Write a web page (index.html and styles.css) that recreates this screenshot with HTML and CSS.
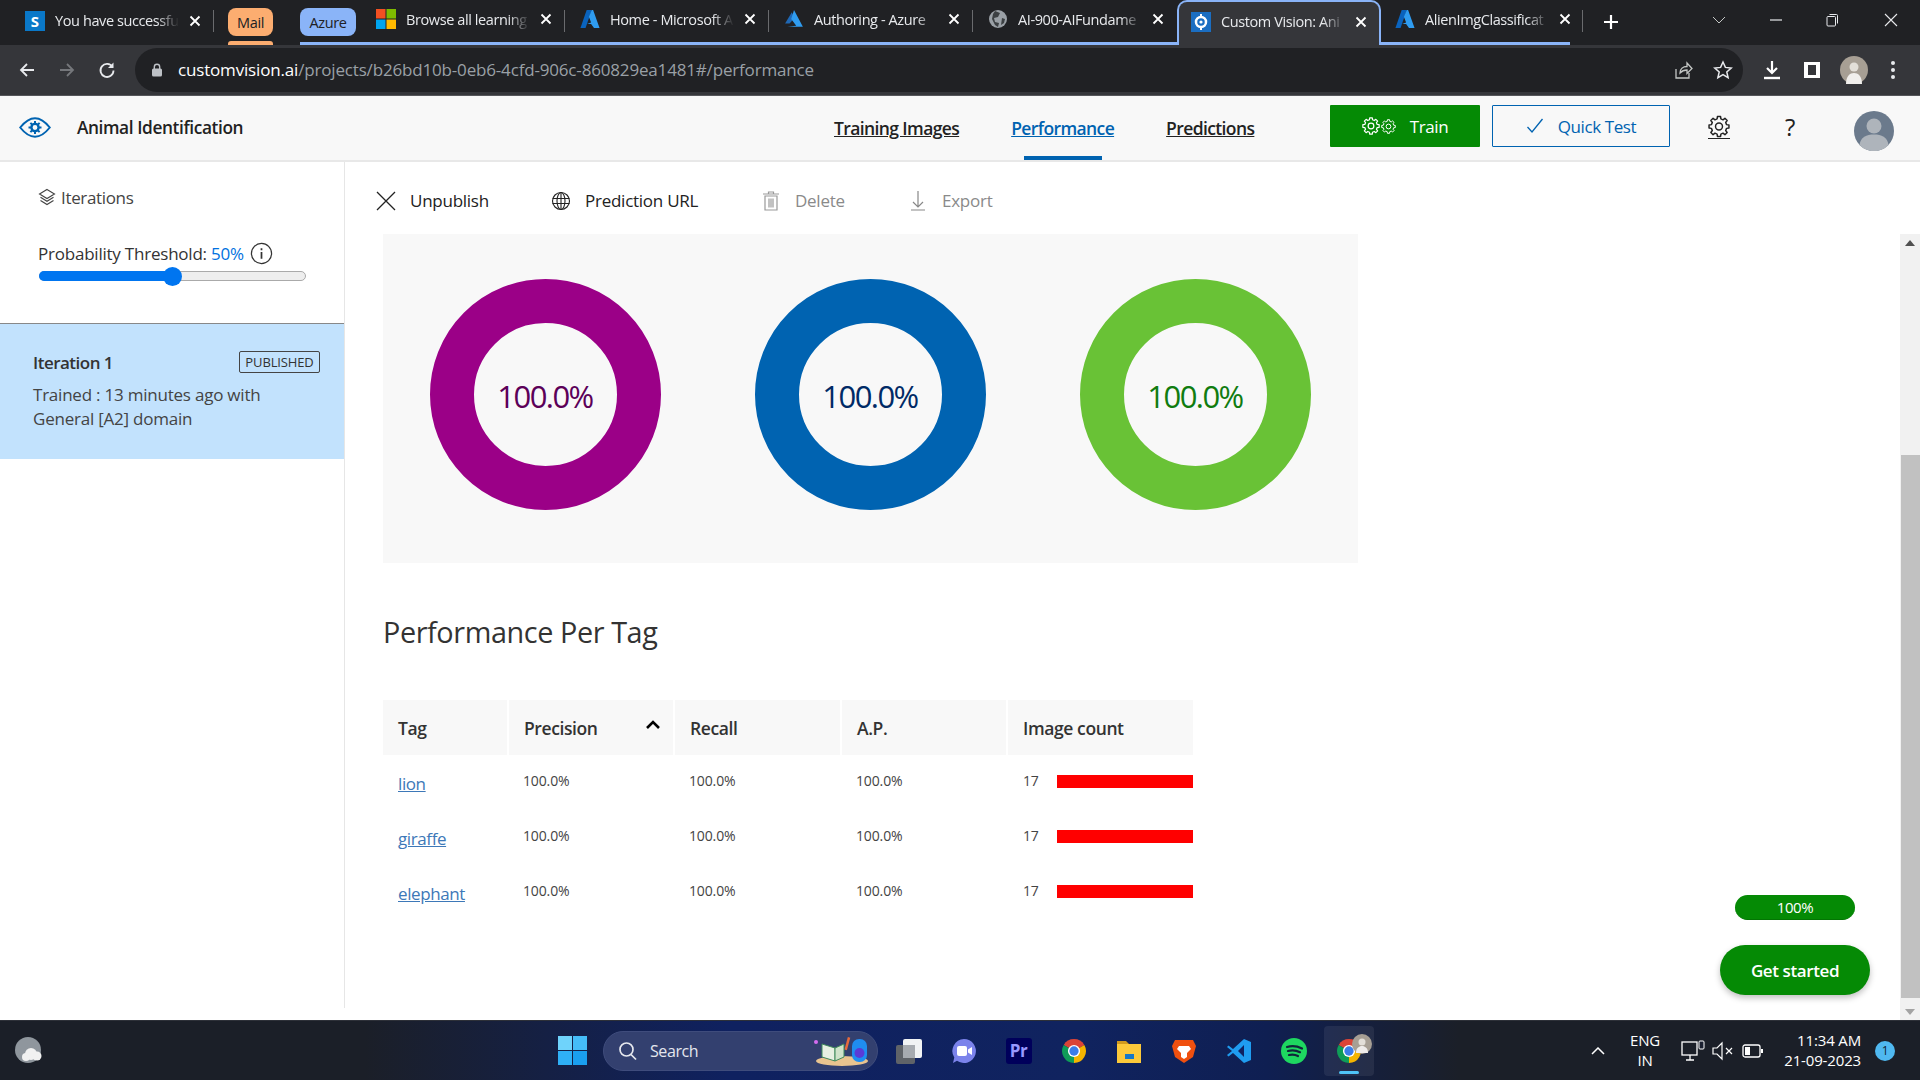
FILE: index.html
```html
<!DOCTYPE html>
<html lang="en">
<head>
<meta charset="utf-8">
<title>Custom Vision: Animal Identification</title>
<link rel="stylesheet" href="styles.css">
</head>
<body>
<svg class="defs" width="0" height="0">
  <defs>
    <symbol id="azure" viewBox="0 0 18 18"><path fill="#0a63bd" d="M6 1h4.600L5 17H.4z"/><path fill="#2f9cf0" d="M10.600 1h1.200L17.600 17h-5L10 13.600H6.400l3.600-1.400L8 7z"/></symbol>
    <symbol id="azure2" viewBox="0 0 18 18"><path fill="#1f68b5" d="M7 3 1 13l4 0L9.500 8z"/><path fill="#2f9cf0" d="M9 1 17 16H3l8-1-4.500-6z"/></symbol>
    <symbol id="chrome" viewBox="-12 -12 24 24"><path fill="#db4437" d="M0 0-9.530-5.500A11 11 0 0 1 9.530-5.500z"/><path fill="#f4b400" d="M0 0 9.530-5.500A11 11 0 0 1 0 11z"/><path fill="#0f9d58" d="M0 0V11A11 11 0 0 1-9.530-5.500z"/><circle r="5.600" fill="#fff"/><circle r="4.300" fill="#3b7de8"/></symbol>
    <symbol id="gear" viewBox="-12 -12 24 24"><path fill="none" stroke="currentColor" stroke-width="1.600" stroke-linejoin="round" d="M8.250-2.060 10.860-1.720V1.720L8.250 2.060 7.290 4.380 8.900 6.470 6.470 8.900 4.380 7.290 2.060 8.250 1.720 10.860H-1.720L-2.060 8.250-4.380 7.290-6.470 8.900-8.900 6.470-7.290 4.380-8.250 2.060-10.860 1.720V-1.720L-8.250-2.060-7.290-4.380-8.900-6.470-6.470-8.900-4.380-7.290-2.060-8.250-1.720-10.860H1.720L2.060-8.250 4.380-7.290 6.470-8.900 8.900-6.470 7.290-4.380z"/><circle r="3.800" fill="none" stroke="currentColor" stroke-width="1.600"/></symbol>
    <symbol id="close" viewBox="0 0 12 12"><path d="M1.500 1.500l9 9m0-9l-9 9" stroke="currentColor" stroke-width="1.800" fill="none"/></symbol>
  </defs>
</svg>

<header class="tabstrip">
  <div class="tab">
    <span class="favicon fav-s">S</span>
    <span class="tab-title">You have successfu</span>
    <svg class="tab-x"><use href="#close"/></svg>
  </div>
  <div class="group-chip chip-mail">Mail</div>
  <div class="chip-slot grouped"><div class="group-chip chip-azure">Azure</div></div>
  <div class="tab grouped">
    <svg class="favicon" viewBox="0 0 20 20"><rect width="9.500" height="9.500" fill="#f25022"/><rect x="10.500" width="9.500" height="9.500" fill="#7fba00"/><rect y="10.500" width="9.500" height="9.500" fill="#00a4ef"/><rect x="10.500" y="10.500" width="9.500" height="9.500" fill="#ffb900"/></svg>
    <span class="tab-title">Browse all learning</span>
    <svg class="tab-x"><use href="#close"/></svg>
  </div>
  <div class="tab grouped">
    <svg class="favicon"><use href="#azure"/></svg>
    <span class="tab-title">Home - Microsoft A</span>
    <svg class="tab-x"><use href="#close"/></svg>
  </div>
  <div class="tab grouped">
    <svg class="favicon"><use href="#azure2"/></svg>
    <span class="tab-title">Authoring - Azure</span>
    <svg class="tab-x"><use href="#close"/></svg>
  </div>
  <div class="tab grouped tab-nosep">
    <svg class="favicon" viewBox="0 0 20 20"><circle cx="10" cy="10" r="9" fill="#9aa0a6"/><path fill="#3c4043" d="M7 2l5 2-2 4-4 1 1 4 4 1-1 4-3-2-3-6 1-5zM14 9l3 1-1 4-3 2z"/></svg>
    <span class="tab-title">AI-900-AIFundame</span>
    <svg class="tab-x"><use href="#close"/></svg>
  </div>
  <div class="tab tab-active">
    <svg class="favicon" viewBox="0 0 20 20"><rect width="20" height="20" fill="#1b6ec2"/><circle cx="10" cy="10" r="5" fill="none" stroke="#fff" stroke-width="2.500"/><circle cx="10" cy="10" r="1.600" fill="#fff"/><path d="M10 2v3M10 15v3" stroke="#fff" stroke-width="2"/></svg>
    <span class="tab-title">Custom Vision: Ani</span>
    <svg class="tab-x"><use href="#close"/></svg>
  </div>
  <div class="tab grouped tab-last">
    <svg class="favicon"><use href="#azure"/></svg>
    <span class="tab-title">AlienImgClassificat</span>
    <svg class="tab-x"><use href="#close"/></svg>
  </div>
  <svg class="newtab" viewBox="0 0 16 16"><path d="M8 1v14M1 8h14" stroke="#fff" stroke-width="2.200"/></svg>
  <div class="window-controls">
    <svg class="wc wc-chev" viewBox="0 0 14 8"><path d="M1 1l6 6 6-6" stroke="#c4c7c5" fill="none"/></svg>
    <svg class="wc wc-min" viewBox="0 0 14 14"><path d="M1 7h12" stroke="#e8eaed" stroke-width="1.200"/></svg>
    <svg class="wc wc-max" viewBox="0 0 14 14"><rect x="2" y="3.500" width="8.500" height="9.500" rx="1" fill="none" stroke="#e8eaed"/><path d="M4.500 1.500h7a1 1 0 0 1 1 1v8" fill="none" stroke="#e8eaed"/></svg>
    <svg class="wc wc-close" viewBox="0 0 14 14"><path d="M1 1l12 12m0-12L1 13" stroke="#e8eaed" stroke-width="1.100"/></svg>
  </div>
</header>

<div class="toolbar">
  <div class="nav-buttons">
    <svg class="nav-btn" viewBox="0 0 18 18"><path d="M16 9H3M9 3 3 9l6 6" fill="none" stroke="#e8eaed" stroke-width="1.800"/></svg>
    <svg class="nav-btn" viewBox="0 0 18 18"><path d="M2 9h13M9 3l6 6-6 6" fill="none" stroke="#75777b" stroke-width="1.800"/></svg>
    <svg class="nav-btn" viewBox="0 0 18 18"><path d="M14.500 6A6.500 6.500 0 1 0 15.500 9.500" fill="none" stroke="#e8eaed" stroke-width="1.800"/><path d="M15.500 1.500V7H10z" fill="#e8eaed"/></svg>
  </div>
  <div class="omnibox">
    <svg class="lock" viewBox="0 0 12 14"><rect x="1" y="5.500" width="10" height="8" rx="1.500" fill="#bdc1c6"/><path d="M3.300 6V4a2.700 2.700 0 0 1 5.400 0v2" fill="none" stroke="#bdc1c6" stroke-width="1.400"/></svg>
    <span class="url"><span class="url-host">customvision.ai</span><span class="url-path">/projects/b26bd10b-0eb6-4cfd-906c-860829ea1481#/performance</span></span>
    <svg class="omni-icon share" viewBox="0 0 20 20"><path d="M3 9v9h13v-5" fill="none" stroke="#c4c7c5" stroke-width="1.300"/><path d="M7 13c0-4 3-6.500 7-6.500V3l5 5.500-5 5V10c-3 0-5 .8-7 3z" fill="none" stroke="#c4c7c5" stroke-width="1.300"/></svg>
    <svg class="omni-icon" viewBox="0 0 20 20"><path d="M10 2l2.400 5.400 5.800.6-4.400 3.900 1.300 5.800L10 14.700 4.900 17.700l1.300-5.800L1.800 8l5.800-.6z" fill="none" stroke="#e8eaed" stroke-width="1.500"/></svg>
  </div>
  <div class="toolbar-right">
    <svg class="tool-icon" viewBox="0 0 20 20"><path d="M10 1v11M5 8l5 5 5-5" fill="none" stroke="#fff" stroke-width="2.200"/><path d="M2 18h16" stroke="#fff" stroke-width="2.400"/></svg>
    <svg class="tool-icon" viewBox="0 0 20 20"><rect x="2" y="2" width="16" height="16" fill="#fff"/><rect x="6" y="5" width="8" height="10" fill="#35363a"/></svg>
    <svg class="tool-avatar" viewBox="0 0 28 28"><circle cx="14" cy="14" r="14" fill="#a79f94"/><circle cx="14" cy="11" r="4.500" fill="#e3dfd8"/><path d="M6 28c0-8 4-11 8-11s8 3 8 11z" fill="#f1efec"/></svg>
    <svg class="tool-menu" viewBox="0 0 4 20"><circle cx="2" cy="3" r="2" fill="#e8eaed"/><circle cx="2" cy="10" r="2" fill="#e8eaed"/><circle cx="2" cy="17" r="2" fill="#e8eaed"/></svg>
  </div>
</div>

<div class="app">
  <div class="app-header">
    <div class="brand">
      <svg class="logo" viewBox="0 0 32 21"><path d="M1.200 10.500C6 4.500 10.500 1.200 16 1.200S26 4.500 30.800 10.500C26 16.500 21.500 19.800 16 19.800S6 16.500 1.200 10.500z" fill="none" stroke="#0063b1" stroke-width="2"/><circle cx="16" cy="10.500" r="3.600" fill="none" stroke="#0063b1" stroke-width="2.400"/><path d="M16 4v3M16 14v3M9.500 10.500h3M19.500 10.500h3M11.400 5.900l2.100 2.100M18.500 13l2.100 2.100M20.600 5.900 18.500 8M13.500 13l-2.100 2.100" stroke="#0063b1" stroke-width="2"/></svg>
      <span class="brand-name">Animal Identification</span>
    </div>
    <nav class="main-nav">
      <a class="nav-link">Training Images</a>
      <a class="nav-link nav-active">Performance</a>
      <a class="nav-link">Predictions</a>
    </nav>
    <div class="actions">
      <button class="btn-train">
        <svg class="gear-lg"><use href="#gear"/></svg><svg class="gear-sm"><use href="#gear"/></svg>
        <span>Train</span>
      </button>
      <button class="btn-quick">
        <svg class="check" viewBox="0 0 18 18"><path d="M1.500 10l4.500 5L16.500 2" fill="none" stroke="#0063b1" stroke-width="1.300"/></svg>
        <span>Quick Test</span>
      </button>
      <svg class="gear-head"><use href="#gear"/></svg>
      <span class="help">?</span>
      <svg class="avatar" viewBox="0 0 40 40"><circle cx="20" cy="20" r="20" fill="#6b7a8c"/><circle cx="20" cy="15" r="7.500" fill="#aeb4bb"/><path d="M5.500 34c1-8 7-10.500 14.500-10.500S33.500 26 34.500 34A20 20 0 0 1 5.500 34z" fill="#aeb4bb"/></svg>
    </div>
  </div>

  <div class="workspace">
    <aside class="sidebar">
      <div class="iter-head">
        <svg class="layers" viewBox="0 0 18 18"><path d="M9 1.500 16.500 6 9 10.500 1.500 6z" fill="none" stroke="#444" stroke-width="1.100"/><path d="M2.500 9.300 9 13.300l6.500-4M2.500 12.500 9 16.500l6.500-4" fill="none" stroke="#444" stroke-width="1.100"/></svg>
        <span>Iterations</span>
      </div>
      <div class="threshold">
        <span>Probability Threshold: <span class="thr-val">50%</span></span>
        <svg class="info" viewBox="0 0 24 24"><circle cx="12" cy="12" r="10.500" fill="none" stroke="#333" stroke-width="1.300"/><path d="M12 10.500v7M12 6.500v2" stroke="#333" stroke-width="1.800"/></svg>
      </div>
      <div class="slider"><div class="slider-fill"></div><div class="slider-knob"></div></div>
      <div class="iter-item">
        <div class="iter-top"><strong>Iteration 1</strong><span class="badge">PUBLISHED</span></div>
        <p class="iter-desc">Trained : 13 minutes ago with General [A2] domain</p>
      </div>
    </aside>

    <main class="content">
      <div class="actionbar">
        <div class="action act-unpub"><svg class="act-icon" viewBox="0 0 20 20"><path d="M1 1l18 18m0-18L1 19" stroke="#222" stroke-width="1.300"/></svg><span>Unpublish</span></div>
        <div class="action act-url"><svg class="act-icon" viewBox="0 0 20 20"><circle cx="10" cy="10" r="8.500" fill="none" stroke="#222" stroke-width="1.100"/><ellipse cx="10" cy="10" rx="4" ry="8.500" fill="none" stroke="#222" stroke-width="1.100"/><path d="M1.500 7.500h17M1.500 12.500h17M10 1.500v17" stroke="#222" stroke-width="1.100"/></svg><span>Prediction URL</span></div>
        <div class="action act-off act-del"><svg class="act-icon" viewBox="0 0 20 20"><path d="M4 5h12v14H4zM2 3h16M7.500 3V1h5v2M8 7.500v9M12 7.500v9M10 7.500v9" fill="none" stroke="#999" stroke-width="1.200"/></svg><span>Delete</span></div>
        <div class="action act-off"><svg class="act-icon" viewBox="0 0 20 20"><path d="M10 0v16M5 11l5 5 5-5M3 19h14" fill="none" stroke="#888" stroke-width="1.200"/></svg><span>Export</span></div>
      </div>
      <div class="scroller">
        <div class="scroll-body">
          <section class="rings">
            <div class="ring ring-purple"><span>100.0%</span></div>
            <div class="ring ring-blue"><span>100.0%</span></div>
            <div class="ring ring-green"><span>100.0%</span></div>
          </section>
          <h2 class="per-tag">Performance Per Tag</h2>
          <div class="tag-table">
            <div class="t-row t-head">
              <div class="t-cell">Tag</div>
              <div class="t-cell t-sort">Precision<svg class="caret" viewBox="0 0 16 10"><path d="M2 8l6-6 6 6" fill="none" stroke="#000" stroke-width="2.600"/></svg></div>
              <div class="t-cell">Recall</div>
              <div class="t-cell">A.P.</div>
              <div class="t-cell t-count">Image count</div>
            </div>
            <div class="t-row">
              <div class="t-cell"><a class="tag-link">lion</a></div>
              <div class="t-cell t-num">100.0%</div><div class="t-cell t-num">100.0%</div><div class="t-cell t-num">100.0%</div>
              <div class="t-cell t-num t-count"><span class="count-num">17</span><span class="count-bar"></span></div>
            </div>
            <div class="t-row">
              <div class="t-cell"><a class="tag-link">giraffe</a></div>
              <div class="t-cell t-num">100.0%</div><div class="t-cell t-num">100.0%</div><div class="t-cell t-num">100.0%</div>
              <div class="t-cell t-num t-count"><span class="count-num">17</span><span class="count-bar"></span></div>
            </div>
            <div class="t-row">
              <div class="t-cell"><a class="tag-link">elephant</a></div>
              <div class="t-cell t-num">100.0%</div><div class="t-cell t-num">100.0%</div><div class="t-cell t-num">100.0%</div>
              <div class="t-cell t-num t-count"><span class="count-num">17</span><span class="count-bar"></span></div>
            </div>
          </div>
        </div>
        <div class="scrollbar">
          <div class="sb-arrow"><svg viewBox="0 0 10 6"><path d="M5 0l5 6H0z" fill="#505050"/></svg></div>
          <div class="sb-track"><div class="sb-thumb"></div></div>
          <div class="sb-arrow"><svg viewBox="0 0 10 6"><path d="M0 0h10L5 6z" fill="#a3a3a3"/></svg></div>
        </div>
      </div>
    </main>
  </div>
  <div class="floating">
    <div class="progress-pill">100%</div>
    <button class="get-started">Get started</button>
  </div>
</div>

<footer class="taskbar">
  <div class="tb-left"><svg class="weather" viewBox="0 0 28 28"><circle cx="13" cy="13" r="13" fill="#8f969d"/><circle cx="16" cy="17" r="6" fill="#f1f1f1"/><circle cx="22" cy="19" r="4.500" fill="#f1f1f1"/><circle cx="11" cy="20" r="4" fill="#f1f1f1"/></svg></div>
  <div class="tb-center">
    <svg class="start" viewBox="0 0 29 29"><rect width="14" height="14" fill="#6fd3fb"/><rect x="15" width="14" height="14" fill="#45bdf8"/><rect y="15" width="14" height="14" fill="#2fb0f6"/><rect x="15" y="15" width="14" height="14" fill="#1a9ff0"/></svg>
    <div class="searchbox">
      <svg class="search-ic" viewBox="0 0 20 20"><circle cx="8.500" cy="8.500" r="6.500" fill="none" stroke="#e6e8ee" stroke-width="1.700"/><path d="M13 13.500l5 5" stroke="#e6e8ee" stroke-width="1.700"/></svg>
      <span>Search</span>
      <svg class="search-art" viewBox="0 0 58 30"><ellipse cx="30" cy="25" rx="26" ry="5" fill="#e9c48f"/><path d="M10 8l13 4v13l-13-4z" fill="#e7f0e2" stroke="#3f8a5a"/><path d="M23 12l9-4v13l-9 4z" fill="#cfe3c9" stroke="#3f8a5a"/><rect x="34" y="1" width="2.500" height="13" fill="#e86a3c" transform="rotate(15 35 8)"/><rect x="40" y="3" width="15" height="23" rx="7" fill="#1f8df0"/><circle cx="47.500" cy="17" r="5" fill="#5a3bd6"/><circle cx="4" cy="6" r="2" fill="#d56cf0"/></svg>
    </div>
    <div class="tb-apps">
      <div class="tb-app"><svg class="tb-ic" viewBox="0 0 26 26"><rect y="7" width="19" height="19" rx="2" fill="#5f6368"/><rect x="7" y="1" width="19" height="19" rx="2" fill="#f1f3f4"/><rect x="7" y="7" width="12" height="13" fill="#a7abb0"/></svg></div>
      <div class="tb-app"><svg class="tb-ic" viewBox="0 0 26 26"><path d="M13 1a12 12 0 1 1-7 21.800L2 25l1.300-5.500A12 12 0 0 1 13 1z" fill="#7b83eb"/><rect x="6" y="8" width="10" height="10" rx="2" fill="#fff"/><path d="M17 11.500l4-2.500v8l-4-2.500z" fill="#fff"/></svg></div>
      <div class="tb-app"><span class="pr">Pr</span></div>
      <div class="tb-app"><svg class="tb-ic"><use href="#chrome"/></svg></div>
      <div class="tb-app"><svg class="tb-ic" viewBox="0 0 26 26"><path d="M1 3h9l3 3h-12z" fill="#d19a1e"/><rect x="1" y="6" width="24" height="19" fill="#fcc93a"/><rect x="9" y="16" width="9" height="5" fill="#1678c8"/></svg></div>
      <div class="tb-app"><svg class="tb-ic" viewBox="0 0 26 26"><path d="M4 2h18l3 6-3 11-9 6-9-6L1 8z" fill="#f0500f"/><path d="M8 8h10l2 3-4 4v4l-3 2-3-2v-4l-4-4z" fill="#fff"/></svg></div>
      <div class="tb-app"><svg class="tb-ic" viewBox="0 0 26 26"><path d="M18 1l7 3v18l-7 3L7 15l-4.500 3.500L1 17l5-4-5-4 1.500-1.500L7 11z" fill="#1f9cf0"/><path d="M18 7l-6 6 6 6z" fill="#0f2160"/></svg></div>
      <div class="tb-app"><svg class="tb-ic" viewBox="0 0 26 26"><circle cx="13" cy="13" r="13" fill="#1ed760"/><path d="M6 9c5-1.500 10-1 15 1.500M7 13c4-1 8-.8 12 1.200M8 17c3-.7 6-.6 9 1" fill="none" stroke="#10263a" stroke-width="2.200" stroke-linecap="round"/></svg></div>
      <div class="tb-app tb-active">
        <svg class="tb-ic"><use href="#chrome"/></svg>
        <svg class="tb-badge" viewBox="0 0 20 20"><circle cx="10" cy="10" r="10" fill="#a79f94"/><circle cx="10" cy="8" r="3.500" fill="#e3dfd8"/><path d="M4 19c0-5 3-7 6-7s6 2 6 7z" fill="#efecea"/></svg>
      </div>
    </div>
  </div>
  <div class="tray">
    <svg class="tray-chev" viewBox="0 0 14 8"><path d="M1 7l6-6 6 6" fill="none" stroke="#fff" stroke-width="1.500"/></svg>
    <div class="lang"><span>ENG</span><span>IN</span></div>
    <svg class="tray-ic" viewBox="0 0 24 22"><rect x="1" y="2" width="15" height="13" fill="none" stroke="#fff" stroke-width="1.300"/><path d="M5 20h8M9 15v5" stroke="#fff" stroke-width="1.300"/><rect x="18" y="1" width="5" height="8" rx="1" fill="#1b2030" stroke="#fff"/></svg>
    <svg class="tray-ic tray-vol" viewBox="0 0 22 20"><path d="M1 7h4l5-5v16l-5-5H1z" fill="none" stroke="#fff" stroke-width="1.200"/><path d="M14 7l6 6m0-6l-6 6" stroke="#fff" stroke-width="1.200"/></svg>
    <svg class="tray-ic tray-bat" viewBox="0 0 22 14"><rect x="1" y="1" width="17" height="12" rx="2" fill="none" stroke="#fff" stroke-width="1.300"/><rect x="3" y="3" width="5" height="8" fill="#fff"/><rect x="19" y="5" width="2" height="4" fill="#fff"/></svg>
    <div class="clock"><span>11:34 AM</span><span>21-09-2023</span></div>
    <span class="notif">1</span>
  </div>
</footer>
</body>
</html>
```
FILE: styles.css
```css
* { box-sizing: border-box; }
html, body { margin: 0; height: 100%; }
body {
  width: 1920px; height: 1080px; overflow: hidden;
  display: flex; flex-direction: column;
  font-family: "Open Sans", "Noto Sans", sans-serif;
  letter-spacing: -0.025em;
  color: #333; background: #fff;
}
.defs { position: absolute; }
svg { display: block; flex: none; }

/* tab strip */
.tabstrip { height: 45px; background: #202124; display: flex; padding-left: 10px; color: #e8eaed; font-size: 14.500px; flex: none; }
.tab { width: 204px; height: 45px; padding-left: 15px; display: flex; align-items: center; position: relative; padding-bottom: 4px; }
.tab::after { content: ""; position: absolute; right: 0; top: 10px; height: 22px; width: 1px; background: #6a6b6e; }
.tab-nosep::after, .tab-active::after { display: none; }
.grouped { border-bottom: 3px solid #8ab4f8; }
.favicon { width: 20px; height: 20px; margin-right: 10px; flex: none; }
.fav-s { background: #0a78c8; color: #fff; font-weight: 700; font-size: 15px; text-align: center; line-height: 20px; letter-spacing: 0; }
.tab-title { width: 124px; flex: none; white-space: nowrap; overflow: hidden; -webkit-mask-image: linear-gradient(90deg, #000 82%, transparent); mask-image: linear-gradient(90deg, #000 82%, transparent); }
.tab-x { width: 12px; height: 12px; margin-left: 10px; color: #fff; }
.tab-active { width: 204px; padding-left: 12px; padding-bottom: 4px; background: #35363a; border: 2px solid #8ab4f8; border-bottom: 0; border-radius: 10px 10px 0 0; }
.tab-last { width: 189px; padding-left: 14px; }
.tab-last::after { right: -13px; }
.group-chip { height: 28px; border-radius: 8px; color: #202124; display: flex; align-items: center; justify-content: center; font-size: 14.500px; }
.chip-mail { width: 45px; margin: 8px 27px 0 14px; background: #fcad70; position: relative; }
.chip-mail::after { content: ""; position: absolute; left: 0; right: 0; top: 33px; height: 4px; background: #fcad70; border-radius: 3px 3px 0 0; }
.chip-slot { width: 61px; height: 45px; padding-top: 8px; }
.chip-azure { width: 56px; background: #8ab4f8; }
.newtab { width: 16px; height: 16px; margin: 14px 0 0 33px; }
.window-controls { display: flex; margin-left: auto; }
.wc { margin-top: 13px; }
.wc-chev { width: 14px; height: 8px; margin-right: 43px; margin-top: 16px; }
.wc-min { width: 14px; height: 14px; margin-right: 42px; }
.wc-max { width: 14px; height: 14px; margin-right: 45px; }
.wc-close { width: 14px; height: 14px; margin-right: 22px; }

/* toolbar */
.toolbar { height: 51px; background: #35363a; display: flex; align-items: center; padding-left: 18px; flex: none; border-bottom: 1px solid #55565a; }
.nav-buttons { display: flex; gap: 22px; width: 117px; }
.nav-btn { width: 18px; height: 18px; }
.omnibox { width: 1608px; height: 44px; background: #202124; border-radius: 22px; display: flex; align-items: center; padding-left: 16px; padding-right: 10px; }
.lock { width: 12px; height: 14px; margin-right: 15px; }
.url { font-size: 17px; white-space: nowrap; color: #fff; letter-spacing: -0.01em; padding-bottom: 2px; }
.url-path { color: #9aa0a6; }
.omni-icon { width: 20px; height: 20px; margin-left: 20px; }
.share { margin-left: auto; }
.toolbar-right { display: flex; align-items: center; margin-left: 19px; }
.tool-icon { width: 20px; height: 20px; margin-right: 20px; }
.tool-icon + .tool-icon { margin-right: 18px; }
.tool-avatar { width: 28px; height: 28px; margin-right: 23px; }
.tool-menu { width: 4px; height: 20px; }

/* app */
.app { flex: 1; display: flex; flex-direction: column; position: relative; min-height: 0; }
.app-header { height: 66px; background: #f8f8f8; border-bottom: 2px solid #e8e8e8; display: flex; flex: none; }
.brand { width: 834px; padding-left: 19px; display: flex; align-items: center; padding-bottom: 2px; }
.logo { width: 32px; height: 21px; margin-right: 26px; }
.brand-name { font-size: 17.300px; font-weight: 600; color: #222; }
.main-nav { width: 496px; display: flex; gap: 52px; align-items: center; }
.nav-link { font-size: 17.500px; font-weight: 600; letter-spacing: -0.035em; color: #222; text-decoration: underline; height: 100%; display: flex; align-items: center; position: relative; }
.nav-active { color: #0063b1; }
.nav-active::after { content: ""; position: absolute; left: 13px; right: 12px; bottom: 0; height: 4px; background: #0063b1; }
.actions { display: flex; align-items: flex-start; padding-top: 9px; }
.btn-train, .btn-quick { height: 42px; font: inherit; letter-spacing: inherit; font-size: 17px; border-radius: 1px; display: flex; align-items: center; justify-content: center; padding: 0; }
.btn-train { width: 150px; background: #058a05; color: #fff; border: 0; }
.btn-train span { margin-left: 14px; }
.gear-lg { width: 18px; height: 18px; }
.gear-sm { width: 15px; height: 15px; margin-left: 1px; }
.btn-quick { width: 178px; margin-left: 12px; background: #f8f8f8; border: 1px solid #0063b1; color: #0063b1; }
.check { width: 18px; height: 18px; margin-right: 14px; }
.gear-head { width: 22px; height: 24px; color: #222; margin: 10px 0 0 38px; border-bottom: 1px solid #222; }
.help { font-size: 24px; color: #222; margin: 5px 0 0 55px; width: 30px; letter-spacing: 0; }
.avatar { width: 40px; height: 40px; margin: 6px 0 0 39px; }

.workspace { flex: 1; display: flex; min-height: 0; }
.sidebar { width: 345px; border-right: 1px solid #e6e6e6; flex: none; font-size: 17px; letter-spacing: -0.013em; margin-bottom: 12px; }
.iter-head { display: flex; align-items: center; gap: 5px; padding: 20px 0 0 38px; height: 50px; color: #444; letter-spacing: -0.02em; }
.layers { width: 18px; height: 18px; }
.threshold { display: flex; align-items: center; gap: 6px; padding: 29px 0 0 38px; height: 53px; }
.thr-val { color: #0071e0; }
.info { width: 23px; height: 23px; }
.slider { margin: 6px 0 0 39px; width: 267px; height: 10px; border: 1px solid #aaa; border-radius: 5px; background: #eee; position: relative; }
.slider-fill { width: 50%; height: 10px; margin: -1px 0 0 -1px; background: #0075f0; border-radius: 5px 0 0 5px; }
.slider-knob { position: absolute; left: 123px; top: -5px; width: 19px; height: 19px; border-radius: 50%; background: #0075f0; }
.iter-item { margin-top: 42px; height: 136px; background: #c2e2fd; border-top: 1px solid #888; padding: 26px 24px 0 33px; }
.iter-top { display: flex; justify-content: space-between; align-items: center; height: 24px; }
.iter-top strong { font-weight: 600; color: #333; letter-spacing: -0.03em; }
.badge { width: 81px; height: 22px; border: 1px solid #444; border-radius: 2px; font-size: 13px; text-align: center; line-height: 20px; color: #333; letter-spacing: -0.01em; }
.iter-desc { margin: 9px 0 0; line-height: 24px; color: #444; width: 250px; }

.content { flex: 1; min-width: 0; display: flex; flex-direction: column; }
.actionbar { height: 72px; display: flex; flex: none; align-items: center; font-size: 17px; letter-spacing: -0.015em; padding-left: 31px; color: #222; padding-top: 5px; }
.action { display: flex; align-items: center; gap: 14px; }
.act-icon { width: 20px; height: 20px; }
.act-unpub { width: 175px; }
.act-url { width: 210px; }
.act-off { color: #8a8a8a; }
.act-del { width: 147px; }
.scroller { flex: 1; display: flex; min-height: 0; }
.scroll-body { flex: 1; padding-left: 38px; min-width: 0; }
.rings { width: 975px; height: 329px; background: #f8f8f8; display: flex; gap: 94px; padding: 45px 0 0 46.500px; }
.ring { width: 231px; height: 231px; border: 44px solid; border-radius: 50%; display: flex; align-items: center; justify-content: center; font-size: 31px; font-weight: 500; letter-spacing: -0.05em; padding-top: 3px; }
.ring-purple { border-color: #9b0087; color: #5c0058; }
.ring-blue { border-color: #0063b1; color: #002a66; }
.ring-green { border-color: #69c236; color: #107c10; }
.per-tag { margin: 47px 0 0; height: 90px; font-size: 28.800px; font-weight: 400; color: #333; line-height: 44px; }
.tag-table { width: 812px; font-size: 17.500px; }
.t-row { display: grid; grid-template-columns: 124px 164px 165px 164px 185px; grid-template-rows: 55px; gap: 2px; height: 55px; }
.t-head { font-weight: 600; color: #333; }
.t-head .t-cell { background: #f8f8f8; line-height: 55px; padding: 1px 0 0 15px; overflow: hidden; }
.t-head .t-sort { display: flex; justify-content: space-between; padding-right: 12px; }
.caret { width: 16px; height: 10px; margin-top: 19px; }
.t-cell { padding-left: 15px; }
.t-num { font-size: 14px; padding-top: 16px; line-height: 19px; color: #444; letter-spacing: -0.01em; padding-left: 14px; }
.tag-link { display: block; font-size: 17px; color: #3d78b8; text-decoration: underline; margin-top: 15px; line-height: 28px; }
.t-num.t-count { display: flex; padding-left: 15px; }
.count-num { width: 34px; }
.count-bar { width: 138px; height: 13px; background: #f00; margin-top: 4px; }
.scrollbar { width: 20px; background: #f1f1f1; display: flex; flex-direction: column; flex: none; }
.sb-arrow { height: 17px; display: flex; align-items: center; justify-content: center; }
.sb-arrow svg { width: 10px; height: 6px; }
.sb-track { flex: 1; padding-top: 204px; }
.sb-thumb { height: 543px; background: #c1c1c1; margin-left: 1px; }
.floating { position: absolute; right: 50px; top: 799px; width: 150px; display: flex; flex-direction: column; align-items: center; gap: 25px; }
.progress-pill { width: 120px; height: 25px; border-radius: 13px; background: #058a05; border-bottom: 1px solid #037503; color: #fff; font-size: 15px; text-align: center; line-height: 25px; }
.get-started { width: 150px; height: 50px; border: 0; border-radius: 25px; background: #058a05; color: #fff; font: inherit; font-size: 17px; font-weight: 600; box-shadow: 0 3px 6px rgba(0,0,0,.25); letter-spacing: inherit; }

/* taskbar */
.taskbar { height: 60px; flex: none; display: flex; align-items: center; border-top: 1px solid #2d3038; color: #fff; background: linear-gradient(90deg, #1b1f28 0, #1b1f28 19%, #0f2160 38%, #10235f 56%, #0f1f52 66%, #1b1f28 76%, #1b1f28 100%); }
.tb-left { width: 558px; padding-left: 15px; }
.weather { width: 28px; height: 28px; }
.tb-center { display: flex; align-items: center; }
.start { width: 29px; height: 29px; margin-right: 16px; }
.searchbox { width: 275px; height: 40px; border-radius: 20px; background: #33406f; border: 1px solid #3f4c7c; display: flex; align-items: center; padding-left: 14px; font-size: 16px; color: #e4e6ee; }
.search-ic { width: 20px; height: 20px; margin-right: 12px; }
.search-art { width: 58px; height: 30px; margin-left: auto; margin-right: 7px; }
.tb-apps { display: flex; margin-left: 3px; }
.tb-app { width: 55px; height: 50px; display: flex; align-items: center; justify-content: center; position: relative; }
.tb-ic { width: 26px; height: 26px; }
.pr { width: 26px; height: 26px; background: #00005b; border-radius: 3px; color: #9999ff; font-size: 17px; font-weight: 700; text-align: center; line-height: 26px; letter-spacing: -0.02em; }
.tb-active { background: rgba(255,255,255,.07); border-radius: 4px; width: 50px; margin-left: 3px; }
.tb-active::after { content: ""; position: absolute; left: 15px; bottom: 2px; width: 20px; height: 3px; border-radius: 2px; background: #4fc3f7; }
.tb-badge { width: 20px; height: 20px; position: absolute; right: 2px; top: 8px; }
.tray { margin-left: auto; display: flex; align-items: center; font-size: 15px; letter-spacing: -0.01em; }
.tray-chev { width: 14px; height: 8px; margin-right: 23px; }
.lang { display: flex; flex-direction: column; align-items: center; line-height: 20px; width: 34px; margin-right: 19px; padding-bottom: 2px; }
.tray-ic { width: 24px; height: 22px; margin-right: 7px; }
.tray-vol { width: 22px; height: 20px; margin-right: 8px; }
.tray-bat { width: 22px; height: 14px; margin-right: 7px; }
.clock { display: flex; flex-direction: column; align-items: flex-end; line-height: 20px; width: 90px; padding-bottom: 2px; }
.notif { width: 20px; height: 20px; border-radius: 50%; background: #4fb8f0; color: #123; font-size: 12px; text-align: center; line-height: 20px; margin: 0 25px 0 14px; }
```
